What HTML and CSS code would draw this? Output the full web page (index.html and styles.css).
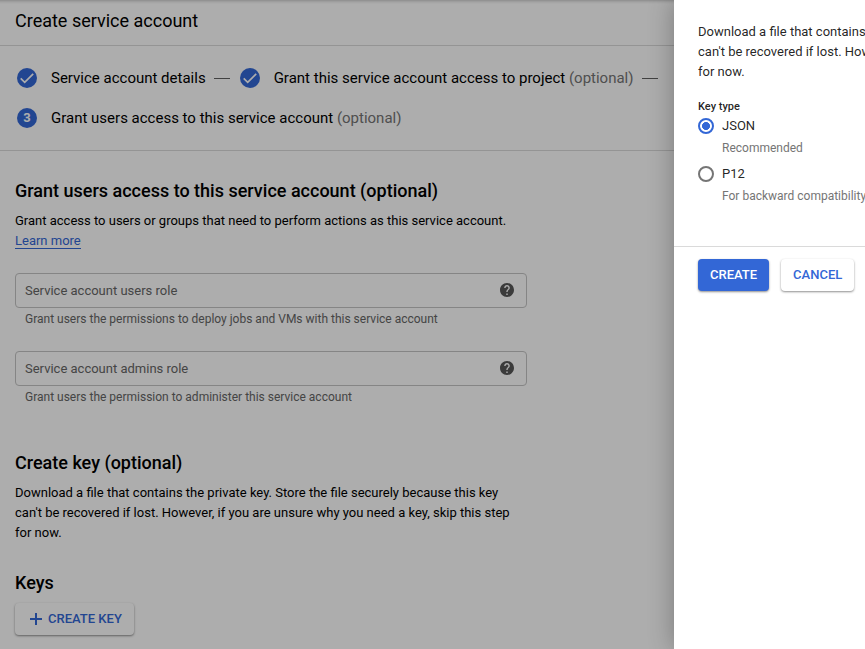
FILE: index.html
```html
<!DOCTYPE html>
<html lang="en">
<head>
<meta charset="utf-8">
<title>Create service account</title>
<link rel="stylesheet" href="styles.css">
</head>
<body>
<main class="page">
  <header class="page-header"><h1>Create service account</h1></header>
  <ol class="stepper">
    <li class="step">
      <svg class="step-icon" viewBox="0 0 20 20"><circle cx="10" cy="10" r="10"/><path d="M3.700 10.300l4 4L16.200 5.800"/></svg>
      <span class="step-label">Service account details</span><span class="step-line"></span>
    </li>
    <li class="step">
      <svg class="step-icon" viewBox="0 0 20 20"><circle cx="10" cy="10" r="10"/><path d="M3.700 10.300l4 4L16.200 5.800"/></svg>
      <span class="step-label">Grant this service account access to project <em>(optional)</em></span><span class="step-line"></span>
    </li>
    <li class="step">
      <span class="step-icon step-number">3</span>
      <span class="step-label">Grant users access to this service account <em>(optional)</em></span>
    </li>
  </ol>
  <div class="content">
    <section class="grant">
      <h2>Grant users access to this service account (optional)</h2>
      <p>Grant access to users or groups that need to perform actions as this service account. <a class="link" href="#">Learn more</a></p>
      <div class="field">
        <span>Service account users role</span>
        <svg class="help" viewBox="2 2 20 20"><path d="M12 2C6.48 2 2 6.48 2 12s4.480 10 10 10 10-4.480 10-10S17.520 2 12 2zm1 17h-2v-2h2v2zm2.070-7.750l-.9.920C13.450 12.900 13 13.500 13 15h-2v-.5c0-1.100.45-2.100 1.170-2.830l1.240-1.260c.37-.36.59-.86.59-1.410 0-1.100-.9-2-2-2s-2 .9-2 2H8c0-2.210 1.790-4 4-4s4 1.790 4 4c0 .88-.36 1.680-.93 2.250z"/></svg>
      </div>
      <div class="hint">Grant users the permissions to deploy jobs and VMs with this service account</div>
      <div class="field">
        <span>Service account admins role</span>
        <svg class="help" viewBox="2 2 20 20"><path d="M12 2C6.48 2 2 6.48 2 12s4.480 10 10 10 10-4.480 10-10S17.520 2 12 2zm1 17h-2v-2h2v2zm2.070-7.750l-.9.920C13.450 12.900 13 13.500 13 15h-2v-.5c0-1.100.45-2.100 1.170-2.830l1.240-1.260c.37-.36.59-.86.59-1.410 0-1.100-.9-2-2-2s-2 .9-2 2H8c0-2.210 1.790-4 4-4s4 1.790 4 4c0 .88-.36 1.680-.93 2.250z"/></svg>
      </div>
      <div class="hint">Grant users the permission to administer this service account</div>
    </section>
    <section class="key">
      <h2>Create key (optional)</h2>
      <p>Download a file that contains the private key. Store the file securely because this key can't be recovered if lost. However, if you are unsure why you need a key, skip this step for now.</p>
    </section>
    <section class="keys">
      <h2>Keys</h2>
      <button class="btn create-key"><svg class="plus" viewBox="0 0 12 12"><path d="M6 0v12M0 6h12"/></svg>Create key</button>
    </section>
  </div>
</main>
<div class="scrim"></div>
<aside class="drawer">
  <div class="drawer-body">
    <p>Download a file that contains<br>can't be recovered if lost. However,<br>for now.</p>
    <div class="key-type">Key type</div>
    <div class="option"><span class="radio checked"></span><span class="option-name">JSON</span></div>
    <div class="option-hint">Recommended</div>
    <div class="option"><span class="radio"></span><span class="option-name">P12</span></div>
    <div class="option-hint">For backward compatibility</div>
  </div>
  <footer class="actions">
    <button class="btn primary">Create</button>
    <button class="btn">Cancel</button>
  </footer>
</aside>
</body>
</html>
```
FILE: styles.css
```css
* { box-sizing: border-box; }
html, body { height: 100%; }
body {
  margin: 0;
  overflow: hidden;
  position: relative;
  background: #fff;
  color: rgba(0, 0, 0, .87);
  font: 13px/20px Roboto, sans-serif;
}
h1, h2, p, ol { margin: 0; padding: 0; }
.page { color: #000; height: 649px; overflow: hidden; }
.page-header {
  height: 46px;
  padding: 9px 15px 0;
  border-bottom: 1px solid #dadada;
  background: linear-gradient(#d0d0d0, #f0f0f0 2px, #fff 4px);
}
h1 { font-size: 18px; line-height: 24px; font-weight: 400; }
h2 { font-size: 18px; line-height: 24px; font-weight: 500; }

.stepper {
  list-style: none;
  display: flex;
  flex-wrap: wrap;
  align-content: flex-start;
  width: 674px;
  height: 105px;
  padding: 12px 0 0 17px;
  border-bottom: 1px solid #dadada;
}
.step { display: flex; align-items: center; height: 40px; font-size: 15px; }
.step-icon { width: 20px; height: 20px; margin-right: 14px; flex: none; }
.step-icon circle { fill: #3367d6; }
.step-icon path { fill: none; stroke: #fff; stroke-width: 1.700; }
.step-number {
  border-radius: 50%;
  background: #3367d6;
  color: #fff;
  font-size: 13px;
  font-weight: 700;
  text-align: center;
}
.step-label { white-space: nowrap; }
.step-label em { font-style: normal; color: #757575; }
.step-line { width: 16px; height: 1px; margin: 1px 10px 0 8px; background: #616161; }

.content { width: 527px; padding: 28px 0 0 15px; }
.content p { margin-top: 8px; }
.link { color: #3367d6; text-decoration: none; border-bottom: 1px solid #3367d6; }
.field {
  display: flex;
  align-items: center;
  justify-content: space-between;
  height: 35px;
  margin-top: 22px;
  padding: 0 12px 0 9px;
  border: 1px solid #c4c4c4;
  border-radius: 4px;
  color: #666;
}
.help { width: 14px; height: 14px; margin-bottom: 1px; fill: #585858; }
.hint { height: 21px; padding: 1px 0 0 10px; font-size: 12px; color: #666; }
.key { margin-top: 44px; }
.keys { margin-top: 28px; }

.btn {
  display: inline-flex;
  align-items: center;
  height: 32px;
  padding: 0 12px;
  border: 0;
  border-radius: 4px;
  background: #fff;
  color: #3367d6;
  box-shadow: 0 1px 2px rgba(0, 0, 0, .35), 0 1px 3px rgba(0, 0, 0, .12);
  font: 500 13px/20px Roboto, sans-serif;
  text-transform: uppercase;
}
.create-key { margin-top: 8px; padding: 0 12px 0 15px; }
.plus { width: 12px; height: 12px; margin-right: 6px; stroke: #3367d6; stroke-width: 2; }

.scrim { position: absolute; inset: 0; background: rgba(0, 0, 0, .32); }
.drawer {
  position: absolute;
  inset: 0 0 0 674px;
  background: #fff;
  box-shadow: 0 0 24px rgba(0, 0, 0, .3);
  overflow: hidden;
}
.drawer-body { height: 247px; padding: 22px 0 0 24px; border-bottom: 1px solid #dadada; white-space: nowrap; }
.key-type { height: 19px; margin-top: 15px; font-size: 11px; font-weight: 500; }
.option { display: flex; align-items: center; height: 20px; }
.radio { width: 16px; height: 16px; margin-right: 8px; border: 2px solid #757575; border-radius: 50%; }
.radio.checked { border-color: #3367d6; background: radial-gradient(circle, #3367d6 3.700px, transparent 4.300px); }
.option-hint { height: 28px; padding: 2px 0 0 24px; font-size: 12px; color: #757575; }
.actions { display: flex; gap: 12px; padding: 12px 0 0 24px; }
.primary { background: #3367d6; color: #fff; }
```
